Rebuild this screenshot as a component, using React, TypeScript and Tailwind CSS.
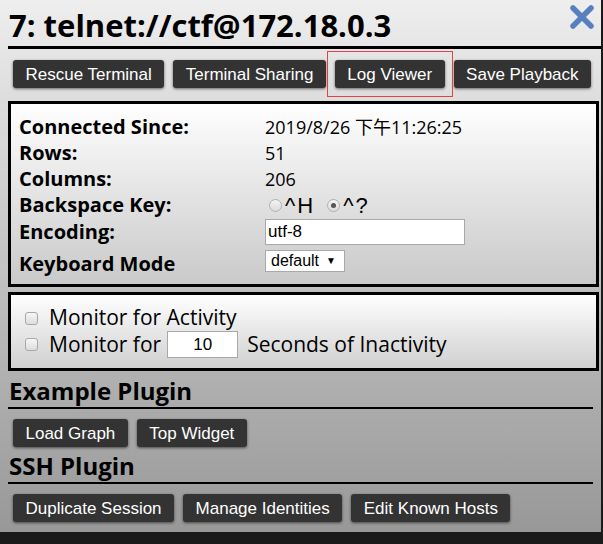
import React from 'react';

const sans = "font-['Open_Sans','Noto_Sans_CJK_TC',sans-serif]";
const arial = "font-['Liberation_Sans',Arial,sans-serif]";

function Btn({ children }: { children: React.ReactNode }) {
  return (
    <button
      className={`${arial} h-[28px] px-[12.5px] rounded-[3px] bg-[#333333] text-white text-[17px] leading-none shadow-[0_1px_3px_rgba(0,0,0,0.55)] whitespace-nowrap`}
    >
      {children}
    </button>
  );
}

function Radio({ checked }: { checked?: boolean }) {
  return (
    <span className="w-[13px] h-[13px] rounded-full border border-[#b0b0b0] bg-gradient-to-b from-[#f4f4f4] to-[#dcdcdc] flex items-center justify-center">
      {checked && <span className="w-[5px] h-[5px] rounded-full bg-[#555]" />}
    </span>
  );
}

function Check() {
  return <span className="w-[13px] h-[13px] rounded-[3px] border border-[#a8a8a8] bg-gradient-to-b from-[#f6f6f6] to-[#dedede] shrink-0" />;
}

function Row({ label, children, className = 'h-[26px]' }: { label: string; children: React.ReactNode; className?: string }) {
  return (
    <div className={`flex items-center ${className}`}>
      <div className="w-[246px] font-bold text-[20px]">{label}</div>
      <div className="flex items-center text-[18px]">{children}</div>
    </div>
  );
}

export default function App() {
  return (
    <div className={`w-[603px] h-[544px] bg-[#1a1a1a] relative overflow-hidden ${sans} text-black`}>
      <div className="w-[601px] h-[532px] bg-gradient-to-b from-[#eeeeee] to-[#989898] pl-[8px] relative">
        <div className="absolute right-[6px] top-[4px]">
          <svg width="26" height="26" viewBox="0 0 26 26">
            <path d="M4 4 L22 22 M22 4 L4 22" stroke="#5a7fbf" strokeWidth="5.5" strokeLinecap="round" />
          </svg>
        </div>
        <h1 className="pt-[4px] leading-[42px] text-[31px] font-bold border-b-[3px] border-black pl-[1px]">
          7: telnet://ctf@172.18.0.3
        </h1>

        <div className="flex gap-[9px] pl-[5px] mt-[11px] relative">
          <Btn>Rescue Terminal</Btn>
          <Btn>Terminal Sharing</Btn>
          <Btn>Log Viewer</Btn>
          <Btn>Save Playback</Btn>
          <div className="absolute left-[319px] top-[-9px] w-[126px] h-[46px] border border-[#e84040]" />
        </div>

        <div className="mt-[13px] mr-[2px] border-[3px] border-black bg-gradient-to-b from-white to-[#c9c9c9] pl-[8px] pt-[10px] pb-[5px]">
          <Row label="Connected Since:">2019/8/26 下午11:26:25</Row>
          <Row label="Rows:">51</Row>
          <Row label="Columns:">206</Row>
          <Row label="Backspace Key:">
            <span className="ml-[4px]"><Radio /></span>
            <span className={`${arial} ml-[3px] text-[22px] tracking-[2px]`}>^H</span>
            <span className="ml-[12px]"><Radio checked /></span>
            <span className={`${arial} ml-[3px] text-[22px] tracking-[2px]`}>^?</span>
          </Row>
          <Row label="Encoding:" className="h-[27px]">
            <div className={`${arial} w-[200px] h-[26px] bg-white border border-[#a9a9a9] text-[17px] leading-[24px] pl-[2px]`}>utf-8</div>
          </Row>
          <Row label="Keyboard Mode" className="h-[30px] mt-[4px]">
            <div className={`${arial} mb-[6px] w-[80px] h-[22px] bg-white border border-[#a9a9a9] text-[16px] leading-[20px] pl-[5px] flex items-center gap-[7px]`}>
              default <span className="text-[10px]">▼</span>
            </div>
          </Row>
        </div>

        <div className="mt-[5px] mr-[2px] border-[3px] border-black bg-gradient-to-b from-white to-[#d0d0d0] pl-[14px] pt-[10px] pb-[10px] text-[21px]">
          <div className="flex items-center h-[26px] gap-[11px]">
            <Check />
            <span>Monitor for Activity</span>
          </div>
          <div className="flex items-center h-[27px]">
            <Check />
            <span className="ml-[11px]">Monitor for</span>
            <div className={`${arial} ml-[6px] w-[71px] h-[27px] bg-white border border-[#a9a9a9] text-[17px] flex items-center justify-center`}>10</div>
            <span className="ml-[9px]">Seconds of Inactivity</span>
          </div>
        </div>

        <h2 className="mr-[8px] pt-[4px] leading-[32px] text-[24px] font-bold border-b-2 border-black pl-[1px]">Example Plugin</h2>
        <div className="flex gap-[9px] pl-[5px] mt-[10px]">
          <Btn>Load Graph</Btn>
          <Btn>Top Widget</Btn>
        </div>

        <h2 className="mr-[8px] mt-[3px] leading-[32px] text-[24px] font-bold border-b-2 border-black pl-[1px]">SSH Plugin</h2>
        <div className="flex gap-[9px] pl-[5px] mt-[10px]">
          <Btn>Duplicate Session</Btn>
          <Btn>Manage Identities</Btn>
          <Btn>Edit Known Hosts</Btn>
        </div>
      </div>
    </div>
  );
}
